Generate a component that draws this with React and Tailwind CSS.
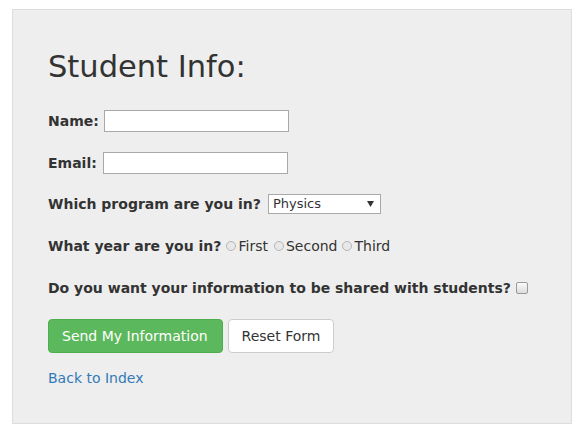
export default function App() {
  const font = { fontFamily: '"DejaVu Sans", Verdana, sans-serif' };
  return (
    <div className="w-[581px] h-[428px] bg-white pl-[12px] pt-[9px]" style={font}>
      <div className="w-[560px] bg-[#eeeeee] border border-[#dddddd] pl-[35px] pt-[40px] pb-[35px] text-[#333333] text-[14px] leading-[20px]">
        <h2 className="text-[30.5px] leading-[33px] font-normal">Student Info:</h2>

        <div className="mt-[27px] h-[22px] flex items-center">
          <span className="font-bold">Name:</span>
          <div className="ml-[5px] w-[185px] h-[22px] bg-white border border-[#a9a9a9]" />
        </div>

        <div className="mt-[20px] h-[22px] flex items-center">
          <span className="font-bold">Email:</span>
          <div className="ml-[6px] w-[185px] h-[22px] bg-white border border-[#a9a9a9]" />
        </div>

        <div className="mt-[19px] h-[22px] flex items-center">
          <span className="font-bold">Which program are you in?</span>
          <div className="ml-[7px] w-[113px] h-[20px] bg-white border border-[#a9a9a9] flex items-center justify-between pl-[4px] pr-[6px]">
            <span className="text-[13px] leading-[18px]">Physics</span>
            <svg width="7" height="6" viewBox="0 0 7 6">
              <path d="M0 0 L7 0 L3.5 6 Z" fill="#333" />
            </svg>
          </div>
        </div>

        <div className="mt-[20px] h-[22px] flex items-center">
          <span className="font-bold">What year are you in?</span>
          <span className="ml-[5px] w-[10px] h-[10px] rounded-full border border-[#b5b5b5] bg-[#e8e8e8]" />
          <span className="ml-[2px]">First</span>
          <span className="ml-[6px] w-[10px] h-[10px] rounded-full border border-[#b5b5b5] bg-[#e8e8e8]" />
          <span className="ml-[2px]">Second</span>
          <span className="ml-[5px] w-[10px] h-[10px] rounded-full border border-[#b5b5b5] bg-[#e8e8e8]" />
          <span className="ml-[2px]">Third</span>
        </div>

        <div className="mt-[20px] h-[22px] flex items-center">
          <span className="font-bold">Do you want your information to be shared with students?</span>
          <span className="ml-[5px] w-[12px] h-[12px] rounded-[2px] border border-[#9a9a9a] bg-gradient-to-b from-[#fafafa] to-[#dcdcdc]" />
        </div>

        <div className="mt-[20px] flex">
          <button className="pl-[13px] pr-[14px] py-[6px] leading-[20px] text-[14px] text-white bg-[#5cb85c] border border-[#4cae4c] rounded-[4px]">
            Send My Information
          </button>
          <button className="ml-[5px] px-[13px] py-[6px] leading-[20px] text-[14px] text-[#333333] bg-white border border-[#cccccc] rounded-[4px]">
            Reset Form
          </button>
        </div>

        <div className="mt-[15px]">
          <a className="text-[#337ab7]">Back to Index</a>
        </div>
      </div>
    </div>
  );
}
